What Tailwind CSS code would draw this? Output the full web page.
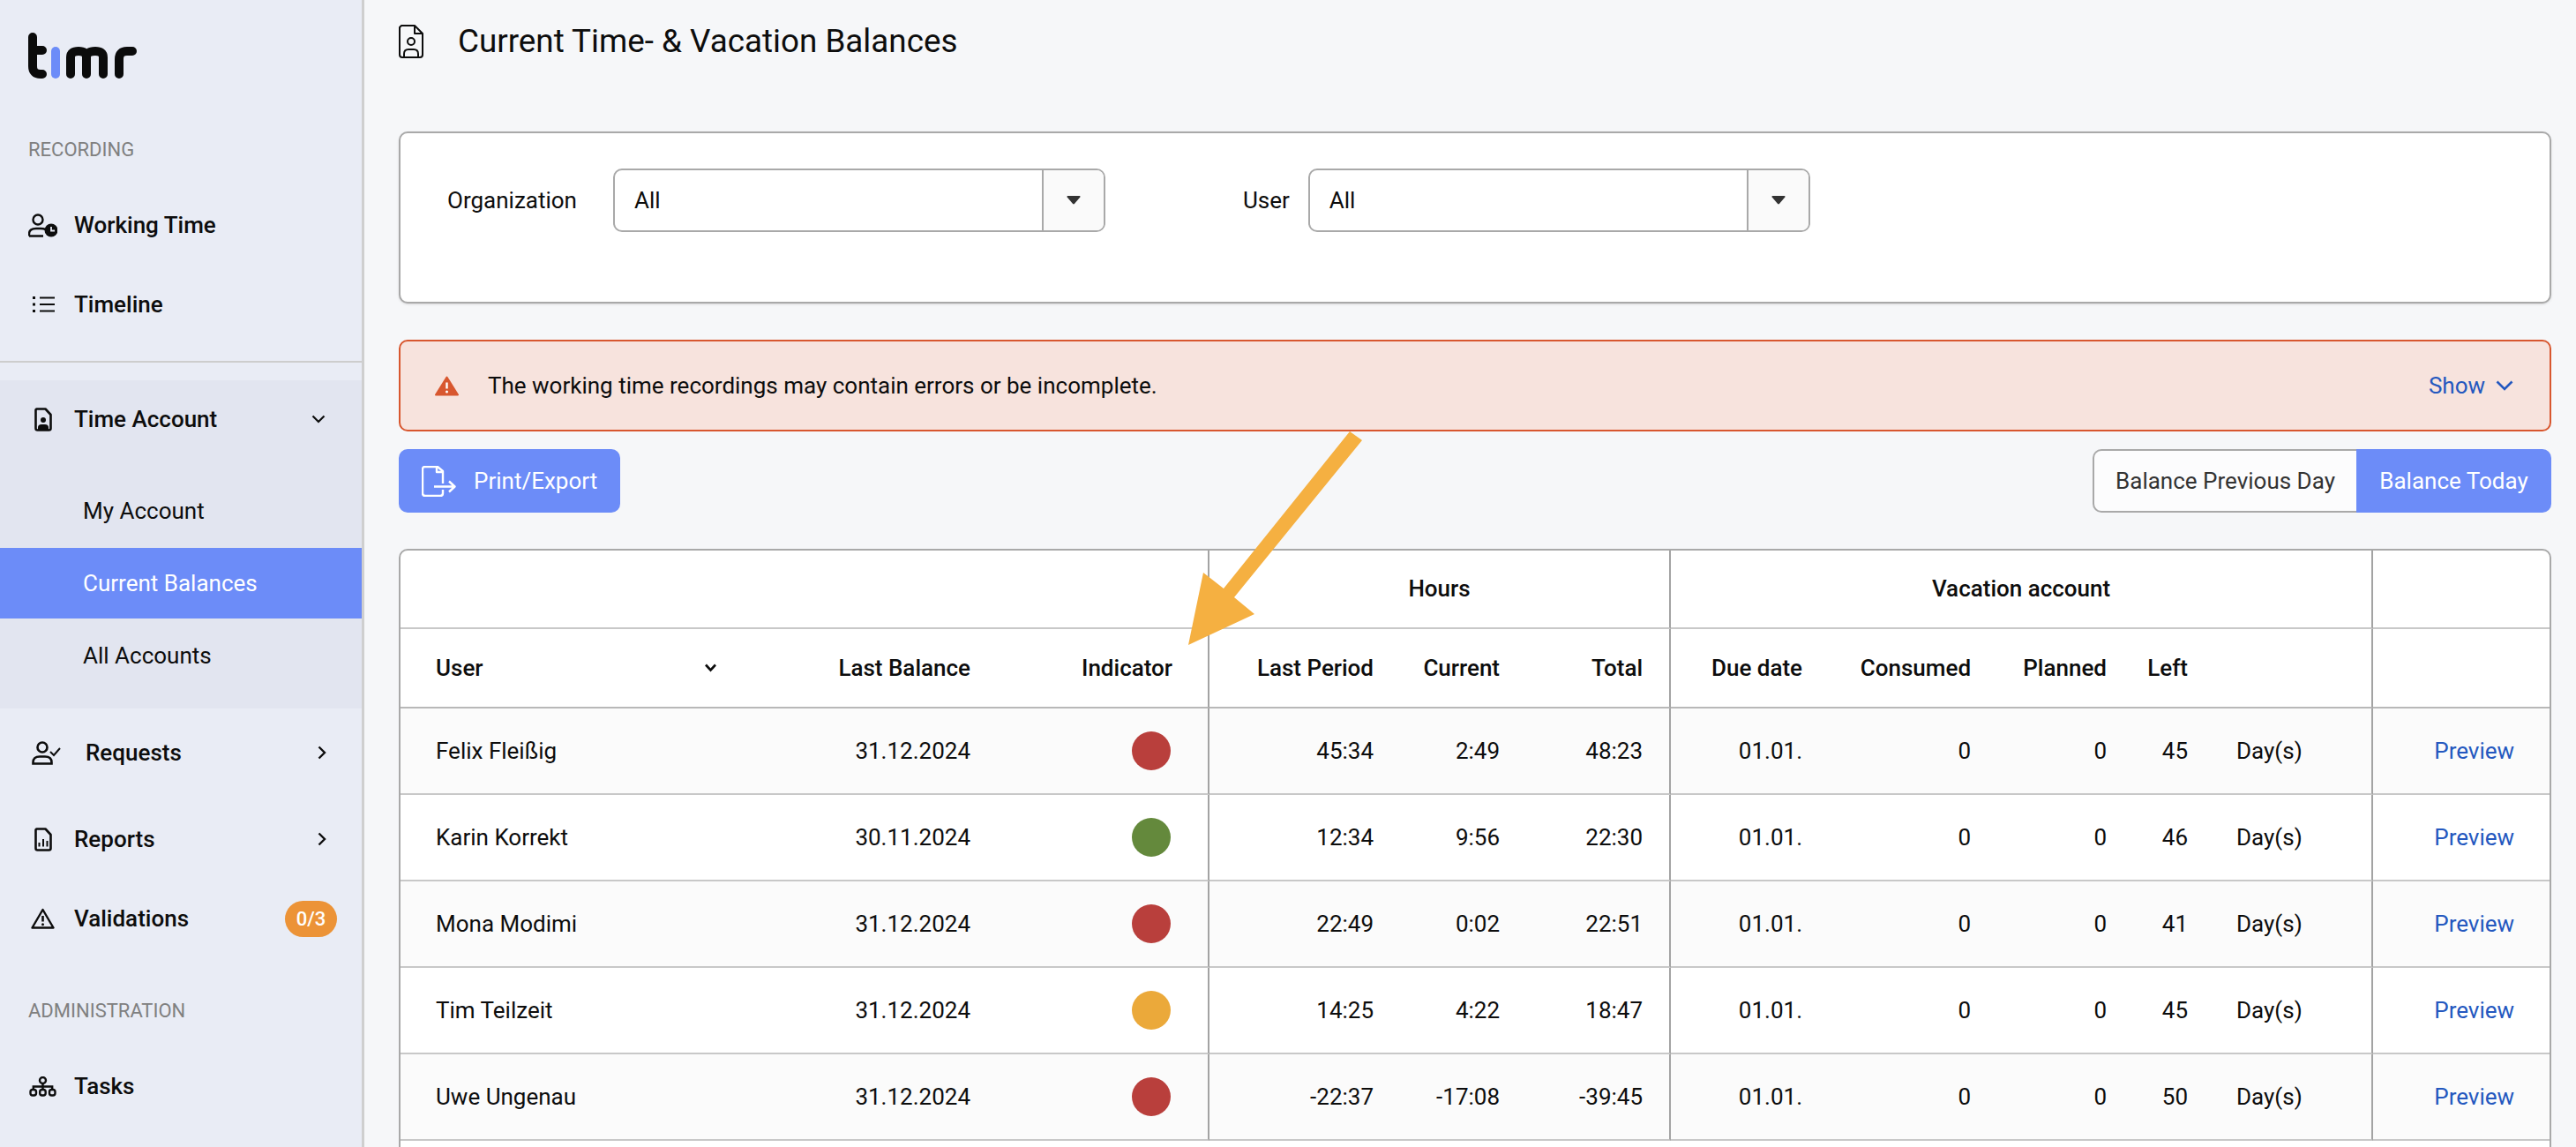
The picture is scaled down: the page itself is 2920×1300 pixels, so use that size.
<!DOCTYPE html>
<html lang="en">
<head>
  <meta charset="UTF-8" />
  <title>timr - Current Balances</title>
  <script src="https://cdn.jsdelivr.net/npm/@tailwindcss/browser@4"></script>
</head>
<body class="bg-[#f6f7f9] text-[#0d0d0d] text-[26px] [font-family:Roboto,sans-serif]">
<div class="relative flex h-[1300px] w-[2920px] overflow-hidden">

  <!-- Sidebar -->
  <aside class="w-[413px] shrink-0 h-full bg-[#e9ecf5] border-r-[3px] border-[#cfcfcf]">
    <div class="h-[148px] pl-[32px] pt-[37px]">
      <svg width="124" height="52" viewBox="0 0 124 52" fill="none" stroke-width="10" stroke-linecap="round" stroke-linejoin="round">
        <path d="M5 5V38Q5 47 14 47H16M5 20H16" stroke="#0b0b0b"/>
        <path d="M31 21V47" stroke="#6c8cf8"/>
        <path d="M48 47V28Q48 21 57 21Q66 21 66 28V47M66 28Q66 21 76 21Q85 21 85 28V47" stroke="#0b0b0b"/>
        <path d="M103 47V30Q103 21 112 21H118" stroke="#0b0b0b"/>
      </svg>
    </div>
    <div class="h-[42px] pl-[32px] flex items-center text-[22px] text-[#808080]">RECORDING</div>

    <div class="mt-[20px] h-[90px] flex items-center font-medium">
      <span class="w-[84px] pl-[32px] shrink-0">
        <svg width="33" height="27" viewBox="0 0 33 27" fill="none" stroke="#0d0d0d" stroke-width="2.4">
          <circle cx="11" cy="7" r="5.5"/>
          <path d="M1 25.5H17M1 25.5V23Q1 17 9 17H14Q17 17 20 18"/>
          <circle cx="26" cy="19" r="7.5" fill="#0d0d0d" stroke="none"/>
          <path d="M26 15V19.5H30" stroke="#e9ecf5" stroke-width="1.8"/>
        </svg>
      </span>
      Working Time
    </div>
    <div class="h-[90px] flex items-center font-medium">
      <span class="w-[84px] pl-[37px] shrink-0">
        <svg width="25" height="20" viewBox="0 0 25 20" fill="none" stroke="#0d0d0d" stroke-width="2.2">
          <path d="M8 2.5H25M8 10H25M8 17.5H25"/>
          <path d="M0 2.5H3M0 10H3M0 17.5H3" stroke-width="3"/>
        </svg>
      </span>
      Timeline
    </div>
    <div class="mt-[19px] h-[2px] bg-[#cdcdcd]"></div>

    <div class="mt-[20px] bg-[#e2e5f0] h-[372px]">
      <div class="h-[88px] flex items-center font-medium">
        <span class="w-[84px] pl-[39px] shrink-0">
          <svg width="20" height="27" viewBox="0 0 20 27" fill="none" stroke="#0d0d0d" stroke-width="2.6" stroke-linejoin="round">
            <path d="M2.5 1.5H12.5L18.5 8V23.5Q18.5 25.5 16.5 25.5H3.500Q1.500 25.500 1.500 23.500V2.500Z"/>
            <circle cx="10" cy="14" r="3" fill="#0d0d0d" stroke="none"/>
            <path d="M4 25V22.500Q4 19 8 19H12Q16 19 16 22.500V25Z" fill="#0d0d0d" stroke="none"/>
          </svg>
        </span>
        <span class="flex-1">Time Account</span>
        <svg class="mr-[41px]" width="16" height="10" viewBox="0 0 16 10" fill="none" stroke="#0d0d0d" stroke-width="2.200"><path d="M1.500 1.500L8 8L14.500 1.500"/></svg>
      </div>
      <div class="mt-[20px] flex flex-col gap-[2px]">
        <div class="h-20 pl-[94px] flex items-center">My Account</div>
        <div class="h-20 pl-[94px] flex items-center bg-[#6c8cf8] text-white">Current Balances</div>
        <div class="h-20 pl-[94px] flex items-center">All Accounts</div>
      </div>
    </div>

    <div class="h-[100px] flex items-center font-medium">
      <span class="w-[97px] pl-[36px] shrink-0">
        <svg width="33" height="27" viewBox="0 0 33 27" fill="none" stroke="#0d0d0d" stroke-width="2.600">
          <circle cx="12" cy="7" r="5.500"/>
          <path d="M1.500 25.500H22.500V24Q22.500 17.500 15 17.500H9Q1.500 17.500 1.500 24Z"/>
          <path d="M21 12L25 16L32 8" stroke-width="2"/>
        </svg>
      </span>
      <span class="flex-1">Requests</span>
      <svg class="mr-[40px]" width="10" height="16" viewBox="0 0 10 16" fill="none" stroke="#0d0d0d" stroke-width="2.400"><path d="M1.500 1.500L8 8L1.500 14.500"/></svg>
    </div>
    <div class="h-[96px] flex items-center font-medium">
      <span class="w-[84px] pl-[39px] shrink-0">
        <svg width="20" height="27" viewBox="0 0 20 27" fill="none" stroke="#0d0d0d" stroke-width="2.600" stroke-linejoin="round">
          <path d="M2.500 1.500H12.500L18.500 8V23.500Q18.500 25.500 16.500 25.500H3.500Q1.500 25.500 1.500 23.500V2.500Z"/>
          <path d="M5.500 21.500V17M10 21.500V13M14.500 21.500V15" stroke-width="2"/>
        </svg>
      </span>
      <span class="flex-1">Reports</span>
      <svg class="mr-[40px]" width="10" height="16" viewBox="0 0 10 16" fill="none" stroke="#0d0d0d" stroke-width="2.400"><path d="M1.500 1.500L8 8L1.500 14.500"/></svg>
    </div>
    <div class="h-[84px] flex items-center font-medium">
      <span class="w-[84px] pl-[35px] shrink-0">
        <svg width="27" height="24" viewBox="0 0 27 24" fill="none" stroke="#0d0d0d" stroke-width="2.400" stroke-linejoin="round">
          <path d="M13.500 2L25.500 22.500H1.500Z"/>
          <path d="M13.500 9V15.500" stroke-width="2.600"/>
          <circle cx="13.500" cy="18.800" r="1.500" fill="#0d0d0d" stroke="none"/>
        </svg>
      </span>
      <span class="flex-1">Validations</span>
      <span class="mr-[28px] w-[59px] h-[41px] rounded-full bg-[#ec9337] text-white text-[22px] font-medium flex items-center justify-center">0/3</span>
    </div>

    <div class="mt-[41px] h-[42px] pl-[32px] flex items-center text-[22px] text-[#808080]">ADMINISTRATION</div>
    <div class="mt-[20px] h-[90px] flex items-center font-medium">
      <span class="w-[84px] pl-[33px] shrink-0">
        <svg width="31" height="23" viewBox="0 0 31 23" fill="none" stroke="#0d0d0d" stroke-width="2.400">
          <circle cx="15.500" cy="4.500" r="3.500"/>
          <rect x="1.500" y="15" width="6.500" height="6.500" rx="2.500"/>
          <rect x="12.200" y="15" width="6.500" height="6.500" rx="2.500"/>
          <rect x="23" y="15" width="6.500" height="6.500" rx="2.500"/>
          <path d="M15.500 8V15M4.800 15V11.500H26.200V15"/>
        </svg>
      </span>
      Tasks
    </div>
  </aside>

  <!-- Main Content -->
  <main class="flex-1 min-w-0 pl-[39px] pr-[28px]">
    <div class="h-[94px] flex items-center">
      <svg class="w-[67px] shrink-0" width="28" height="38" viewBox="0 0 67 38" fill="none" stroke="#0d0d0d" stroke-width="2" stroke-linejoin="round">
        <path d="M3 1H18L27 10V34Q27 37 24 37H4Q1 37 1 34V3Z"/>
        <path d="M18 1V10H27"/>
        <circle cx="14" cy="19" r="4"/>
        <path d="M6 37V33Q6 28 11 28H17Q22 28 22 33V37"/>
      </svg>
      <h1 class="text-[36.8px] leading-none">Current Time- &amp; Vacation Balances</h1>
    </div>

    <!-- Filters -->
    <section class="mt-[55px] h-[195px] bg-white border-2 border-[#a9a9a9] rounded-[10px] shadow-sm pl-[53px] pt-[40px] flex items-start">
      <label class="h-[72px] flex items-center">Organization</label>
      <div class="ml-[41px] w-[558px] h-[72px] border-2 border-[#a9a9a9] rounded-[10px] flex overflow-hidden">
        <span class="flex-1 pl-[22px] flex items-center">All</span>
        <span class="w-[70px] bg-[#fafafa] border-l-2 border-[#a9a9a9] flex items-center justify-center">
          <svg width="16" height="10" viewBox="0 0 18 11" fill="#333"><path d="M1.500 0H16.500Q18 0 17.200 1.500L10 10Q9 11 8 10L.8 1.500Q0 0 1.500 0Z"/></svg>
        </span>
      </div>
      <label class="ml-[156px] h-[72px] flex items-center">User</label>
      <div class="ml-[21px] w-[569px] h-[72px] border-2 border-[#a9a9a9] rounded-[10px] flex overflow-hidden">
        <span class="flex-1 pl-[22px] flex items-center">All</span>
        <span class="w-[70px] bg-[#fafafa] border-l-2 border-[#a9a9a9] flex items-center justify-center">
          <svg width="16" height="10" viewBox="0 0 18 11" fill="#333"><path d="M1.500 0H16.500Q18 0 17.200 1.500L10 10Q9 11 8 10L.8 1.500Q0 0 1.500 0Z"/></svg>
        </span>
      </div>
    </section>

    <!-- Warning -->
    <section class="mt-[41px] h-[104px] bg-[#f7e3dd] border-2 border-[#d8572f] rounded-[10px] pl-[39px] pr-[41px] flex items-center">
      <svg class="shrink-0 mr-[33px]" width="27" height="23" viewBox="0 0 27 23">
        <path d="M13.500 1.500L26 21.500H1Z" fill="#d8572f" stroke="#d8572f" stroke-width="2" stroke-linejoin="round"/>
        <path d="M13.500 7.500V14.500" stroke="#fff" stroke-width="2.400"/>
        <circle cx="13.500" cy="18" r="1.500" fill="#fff"/>
      </svg>
      <span class="flex-1">The working time recordings may contain errors or be incomplete.</span>
      <span class="text-[#2458bf]">Show</span>
      <svg class="ml-[12px]" width="20" height="12" viewBox="0 0 20 12" fill="none" stroke="#2458bf" stroke-width="2.600"><path d="M1.500 1.500L10 10L18.500 1.500"/></svg>
    </section>

    <!-- Actions -->
    <div class="mt-[20px] h-[72px] flex justify-between">
      <button class="w-[251px] h-[72px] bg-[#6c8cf8] text-white rounded-[10px] pl-[26px] flex items-center">
        <svg class="mr-[20px]" width="39" height="35" viewBox="0 0 39 35" fill="none" stroke="#fff" stroke-width="2.400" stroke-linejoin="round">
          <path d="M24 20V6L18 1H4Q1 1 1 4V31Q1 34 4 34H21Q24 34 24 31V27"/>
          <path d="M17 1V7H24"/>
          <path d="M14 23.500H37M31 17.500L37.500 23.500L31 29.500"/>
        </svg>
        Print/Export
      </button>
      <div class="flex h-[72px]">
        <button class="w-[299px] bg-[#fcfcfd] text-[#333] border-2 border-r-0 border-[#a9a9a9] rounded-l-[10px]">Balance Previous Day</button>
        <button class="w-[221px] bg-[#6c8cf8] text-white rounded-r-[10px]">Balance Today</button>
      </div>
    </div>

    <!-- Table -->
    <div class="mt-[41px] h-[720px] bg-white border-2 border-[#a9a9a9] rounded-t-[10px] overflow-hidden">
      <table class="w-[2436px] table-fixed border-separate border-spacing-0">
        <colgroup>
          <col class="w-[381px]"/><col class="w-[291px]"/><col class="w-[245px]"/>
          <col class="w-[212px]"/><col class="w-[143px]"/><col class="w-[168px]"/>
          <col class="w-[175px]"/><col class="w-[191px]"/><col class="w-[154px]"/><col class="w-[92px]"/><col class="w-[184px]"/>
          <col class="w-[200px]"/>
        </colgroup>
        <thead class="font-medium">
          <tr class="h-[89px]">
            <th colspan="3" class="border-b-2 border-r-2 border-b-[#c8c8c8] border-r-[#a3a3a3]"></th>
            <th colspan="3" class="font-medium text-center border-b-2 border-r-2 border-b-[#c8c8c8] border-r-[#a3a3a3]">Hours</th>
            <th colspan="5" class="font-medium text-center border-b-2 border-r-2 border-b-[#c8c8c8] border-r-[#a3a3a3]">Vacation account</th>
            <th class="border-b-2 border-b-[#c8c8c8]"></th>
          </tr>
          <tr class="h-[90px]">
            <th class="font-medium text-left pl-[40px] pr-[22px] border-b-2 border-b-[#b8b8b8]">
              <span class="flex items-center justify-between">User
                <svg width="15" height="10" viewBox="0 0 15 10" fill="none" stroke="#0d0d0d" stroke-width="2.600"><path d="M2 1.500L7.500 7.500L13 1.500"/></svg>
              </span>
            </th>
            <th class="font-medium text-right pr-[26px] border-b-2 border-b-[#b8b8b8]">Last Balance</th>
            <th class="font-medium text-right pr-[40px] border-b-2 border-r-2 border-b-[#b8b8b8] border-r-[#a3a3a3]">Indicator</th>
            <th class="font-medium text-right pr-[26px] border-b-2 border-b-[#b8b8b8]">Last Period</th>
            <th class="font-medium text-right pr-[26px] border-b-2 border-b-[#b8b8b8]">Current</th>
            <th class="font-medium text-right pr-[30px] border-b-2 border-r-2 border-b-[#b8b8b8] border-r-[#a3a3a3]">Total</th>
            <th class="font-medium text-right pr-[26px] border-b-2 border-b-[#b8b8b8]">Due date</th>
            <th class="font-medium text-right pr-[26px] border-b-2 border-b-[#b8b8b8]">Consumed</th>
            <th class="font-medium text-right pr-[26px] border-b-2 border-b-[#b8b8b8]">Planned</th>
            <th class="font-medium text-right pr-[26px] border-b-2 border-b-[#b8b8b8]">Left</th>
            <th class="border-b-2 border-r-2 border-b-[#b8b8b8] border-r-[#a3a3a3]"></th>
            <th class="border-b-2 border-b-[#b8b8b8]"></th>
          </tr>
        </thead>
        <tbody id="rows"></tbody>
      </table>
    </div>
  </main>

  <!-- Annotation arrow -->
  <svg class="absolute left-0 top-0 pointer-events-none" width="2920" height="1300" viewBox="0 0 2920 1300">
    <polygon points="1347,731 1364,649 1387,667 1530,489 1544,499 1399,677 1422,696" fill="#f5b041"/>
  </svg>
</div>

<script>
  const users = [
    ['Felix Fleißig', '31.12.2024', 'bg-[#b93f3c]', '45:34', '2:49', '48:23', '45'],
    ['Karin Korrekt', '30.11.2024', 'bg-[#64893c]', '12:34', '9:56', '22:30', '46'],
    ['Mona Modimi', '31.12.2024', 'bg-[#b93f3c]', '22:49', '0:02', '22:51', '41'],
    ['Tim Teilzeit', '31.12.2024', 'bg-[#eba93a]', '14:25', '4:22', '18:47', '45'],
    ['Uwe Ungenau', '31.12.2024', 'bg-[#b93f3c]', '-22:37', '-17:08', '-39:45', '50'],
  ];
  const line = 'border-b-2 border-b-[#c8c8c8]';
  const split = 'border-r-2 border-r-[#a3a3a3]';

  document.getElementById('rows').innerHTML = users.map((u, i) => `
    <tr class="h-[98px] ${i % 2 === 0 ? 'bg-[#fbfbfb]' : 'bg-white'}">
      <td class="pl-[40px] ${line}">${u[0]}</td>
      <td class="text-right pr-[26px] ${line}">${u[1]}</td>
      <td class="pr-[42px] ${line} ${split}"><span class="block ml-auto w-[44px] h-[44px] rounded-full ${u[2]}"></span></td>
      <td class="text-right pr-[26px] ${line}">${u[3]}</td>
      <td class="text-right pr-[26px] ${line}">${u[4]}</td>
      <td class="text-right pr-[30px] ${line} ${split}">${u[5]}</td>
      <td class="text-right pr-[26px] ${line}">01.01.</td>
      <td class="text-right pr-[26px] ${line}">0</td>
      <td class="text-right pr-[26px] ${line}">0</td>
      <td class="text-right pr-[26px] ${line}">${u[6]}</td>
      <td class="pl-[29px] ${line} ${split}">Day(s)</td>
      <td class="text-right pr-[40px] text-[#2458bf] ${line}">Preview</td>
    </tr>
  `).join('');
</script>
</body>
</html>
